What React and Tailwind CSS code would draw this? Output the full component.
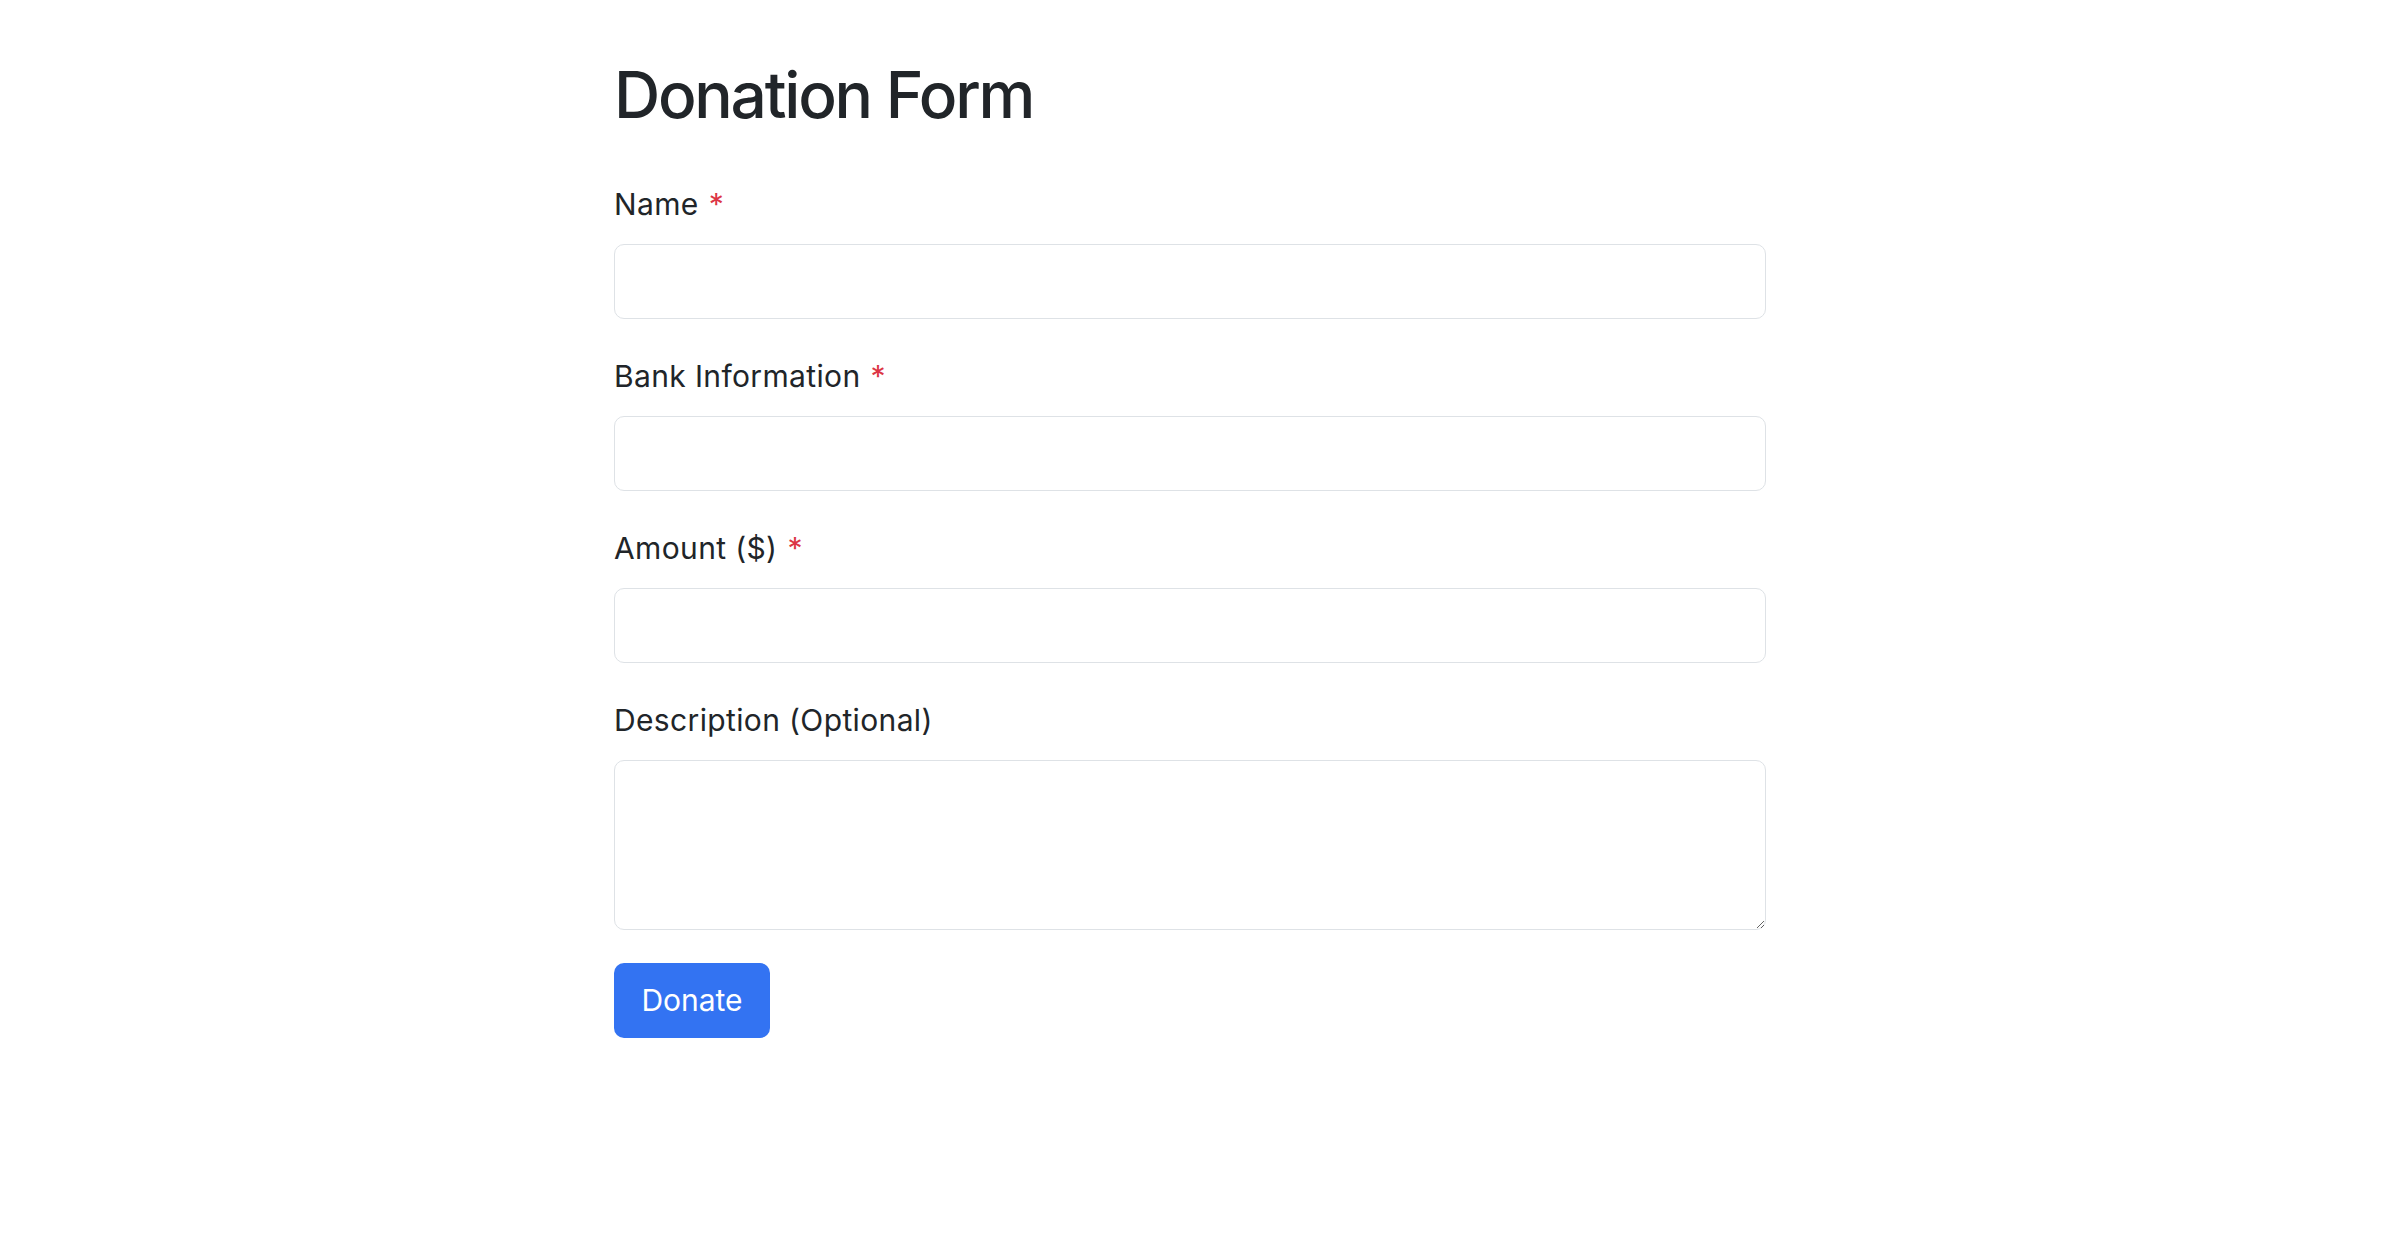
import React from 'react';

const Field = ({ label, required, children }) => (
  <div className="flex flex-col">
    <label className="mb-[17px] text-[30px] leading-[45px] tracking-[0.012em] text-[#212529]">
      {label}
      {required && <span className="ml-[10px] text-[#dc3545]">*</span>}
    </label>
    {children}
  </div>
);

const inputCls =
  'block h-[75px] w-full rounded-[10px] border-[1.5px] border-[#dee2e6] bg-white px-[18px] text-[30px] text-[#212529] outline-none';

const App = () => {
  return (
    <div className="min-h-screen bg-white font-['Inter',sans-serif]">
      <div className="w-[1152px] ml-[614px] pt-[56px]">
        <h1 className="text-[64px] font-medium leading-[77px] tracking-[-0.035em] text-[#212529]">Donation Form</h1>
        <form className="mt-[49px] flex flex-col gap-[35px]" onSubmit={(e) => e.preventDefault()}>
          <Field label="Name" required>
            <input type="text" className={inputCls} />
          </Field>
          <Field label="Bank Information" required>
            <input type="text" className={inputCls} />
          </Field>
          <Field label="Amount ($)" required>
            <input type="number" className={inputCls} />
          </Field>
          <Field label="Description (Optional)">
            <textarea className="block h-[170px] w-full rounded-[10px] border-[1.5px] border-[#dee2e6] bg-white px-[18px] py-[10px] text-[30px] text-[#212529] outline-none" />
          </Field>
          <div className="-mt-[2px]">
            <button
              type="submit"
              className="h-[75px] w-[156px] rounded-[10px] bg-[#3373f2] text-[30px] text-white"
            >
              Donate
            </button>
          </div>
        </form>
      </div>
    </div>
  );
};

export default App;
